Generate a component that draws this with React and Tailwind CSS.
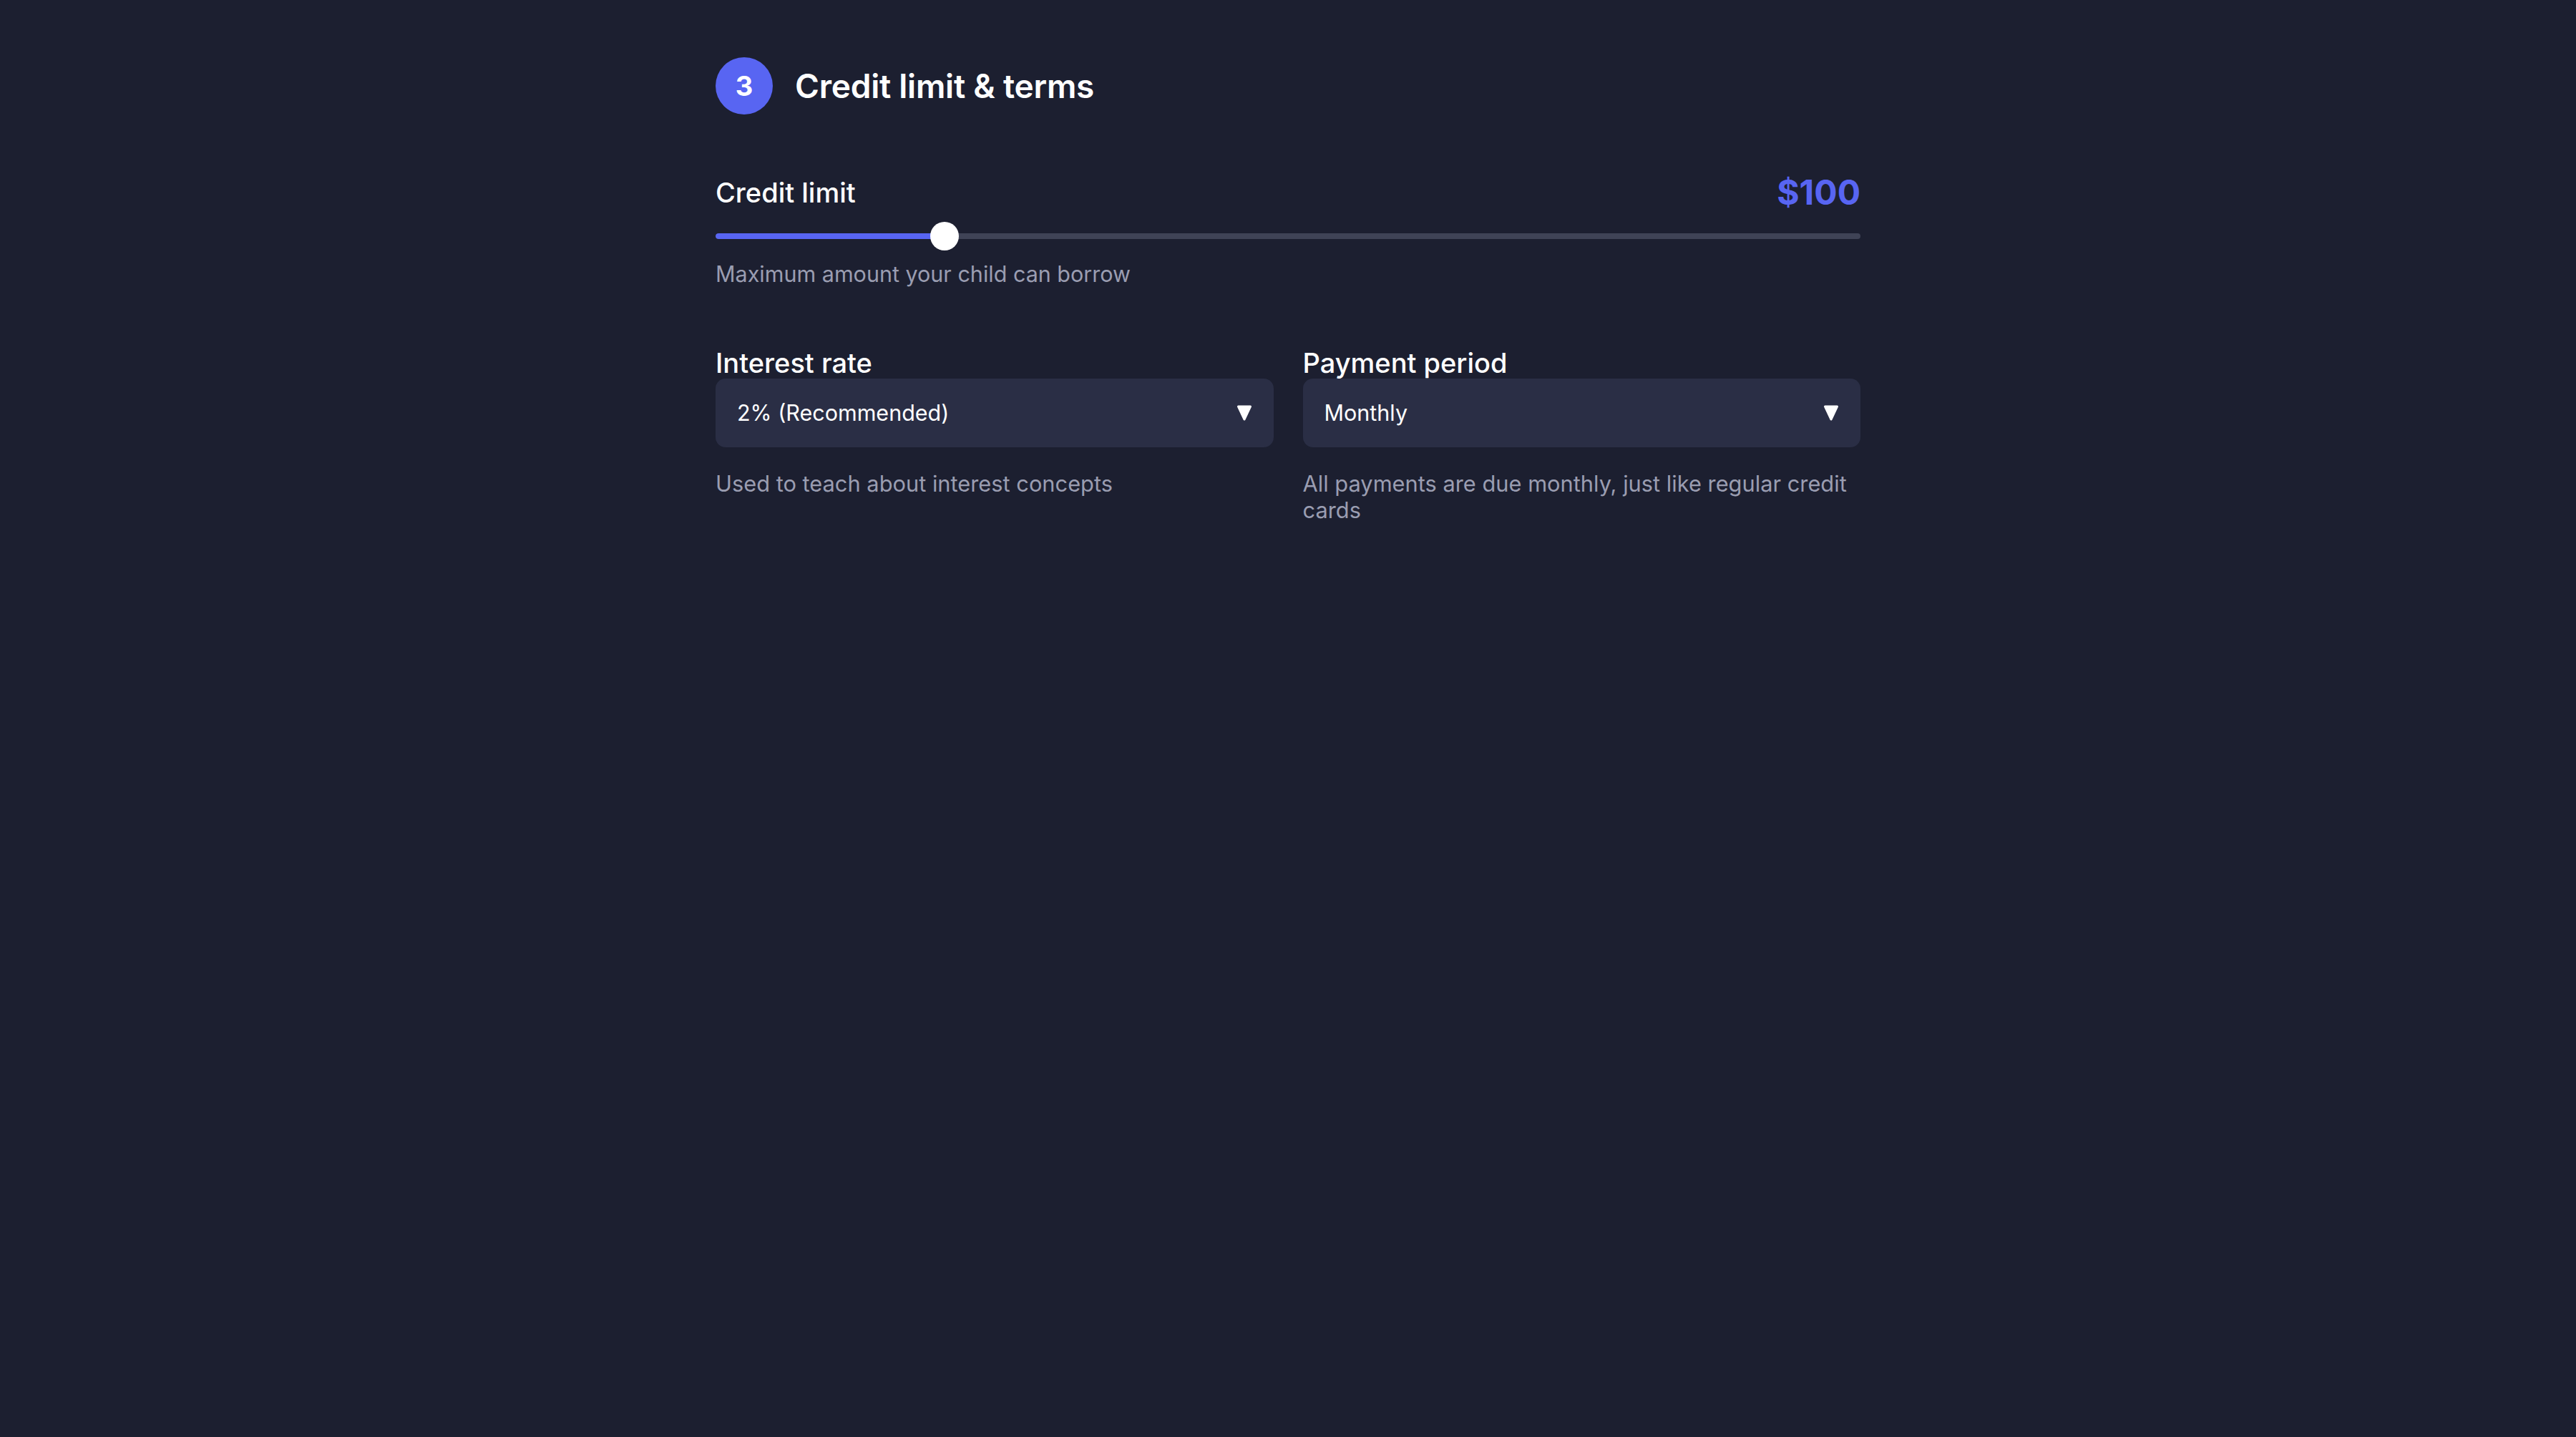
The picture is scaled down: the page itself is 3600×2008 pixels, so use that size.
import React, { useState } from "react";

function StepHeader({ step, title }) {
  return (
    <div className="flex items-center gap-[31px]">
      <div className="w-[80px] h-[80px] rounded-full bg-[#5865f2] flex items-center justify-center text-white text-[38px] font-bold">
        {step}
      </div>
      <h2 className="text-[46px] font-semibold text-white tracking-[-0.005em]">
        {title}
      </h2>
    </div>
  );
}

function Caret() {
  return (
    <svg
      width="22"
      height="22"
      viewBox="0 0 22 22"
      className="pointer-events-none absolute right-[30px] top-1/2 -translate-y-1/2"
    >
      <polygon
        points="2.5,2 19.5,2 11,20"
        fill="#ffffff"
        stroke="#ffffff"
        strokeWidth="3"
        strokeLinejoin="round"
      />
    </svg>
  );
}

function SelectField({ label, value, options, onChange, hint }) {
  return (
    <div className="flex flex-col">
      <label className="text-[38px] leading-[42px] font-medium text-white">
        {label}
      </label>
      <div className="relative mt-[1px]">
        <select
          value={value}
          onChange={(e) => onChange(e.target.value)}
          className="appearance-none w-full h-[96px] rounded-[14px] bg-[#2a2e45] pl-[30px] pr-[70px] text-[30.5px] text-white outline-none"
        >
          {options.map((o) => (
            <option key={o} value={o}>
              {o}
            </option>
          ))}
        </select>
        <Caret />
      </div>
      <p className="mt-[32px] text-[30.8px] leading-[37px] text-[#9a9db1]">
        {hint}
      </p>
    </div>
  );
}

export default function App() {
  const [limit] = useState(100);
  const [rate, setRate] = useState("2% (Recommended)");
  const [period, setPeriod] = useState("Monthly");
  const pct = (limit / 500) * 100;

  return (
    <div
      className="min-h-screen bg-[#1c1f30] text-white"
      style={{ fontFamily: "Inter, 'Noto Sans', sans-serif" }}
    >
      <div className="w-[1600px] mx-auto pt-[80px]">
        <StepHeader step={3} title="Credit limit & terms" />

        <div className="mt-[81px] flex items-center justify-between">
          <span className="text-[38px] leading-[56px] font-medium">
            Credit limit
          </span>
          <span className="text-[48px] leading-[56px] font-bold text-[#5865f2]">
            ${limit}
          </span>
        </div>

        <div className="mt-[13px] relative h-[40px] flex items-center">
          <div className="w-full h-[8px] rounded-full bg-[#3f4356] overflow-hidden">
            <div
              className="h-full bg-[#5865f2] rounded-full"
              style={{ width: `${pct}%` }}
            />
          </div>
          <div
            className="absolute top-0 w-[40px] h-[40px] -ml-[20px] rounded-full bg-white"
            style={{ left: `${pct}%` }}
          />
        </div>

        <p className="mt-[14px] text-[30.5px] leading-[38px] text-[#9a9db1]">
          Maximum amount your child can borrow
        </p>

        <div className="mt-[84px] grid grid-cols-2 gap-[41px]">
          <SelectField
            label="Interest rate"
            value={rate}
            onChange={setRate}
            options={["0% (No interest)", "2% (Recommended)", "5%", "10%"]}
            hint="Used to teach about interest concepts"
          />
          <SelectField
            label="Payment period"
            value={period}
            onChange={setPeriod}
            options={["Weekly", "Biweekly", "Monthly"]}
            hint="All payments are due monthly, just like regular credit cards"
          />
        </div>
      </div>
    </div>
  );
}
